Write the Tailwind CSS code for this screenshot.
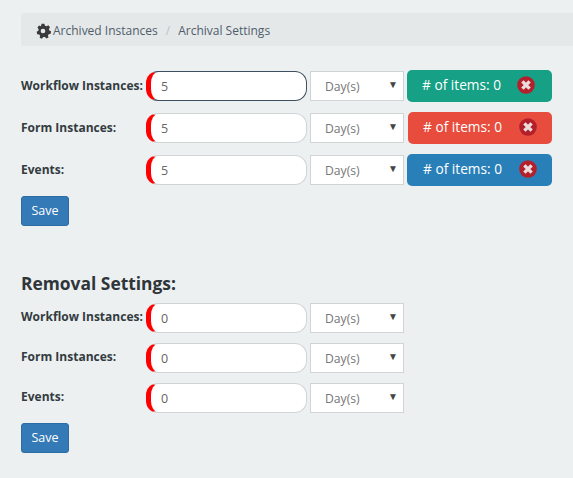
<!DOCTYPE html>
<html>
<head>
<meta charset="utf-8">
<script src="https://cdn.jsdelivr.net/npm/@tailwindcss/browser@4"></script>
</head>
<body class="m-0 bg-[#ecf0f1] font-['Open_Sans',sans-serif] overflow-hidden">
<div class="w-[573px] h-[478px] pt-[13px] pl-[21px] overflow-hidden">
  <div class="h-[33px] w-[552px] bg-[#e4e8e9] rounded-l-[3px] flex items-center pl-[14px] text-[12px] text-[#4f5d6b]">
    <svg class="w-[16px] h-[16px] mr-[2px] mt-[3px]" viewBox="0 0 24 24"><path fill="#3a3a3a" fill-rule="evenodd" d="M10 1h4l1 3 2.2.9 2.9-1.400 2.400 2.900-1.600 2.600.6 2.200 2.500 1.300-.4 3.600-3 .6-1.200 2 .9 3-3.200 1.700-2.100-2.300h-2.600L10.300 23.500 7 22l.7-3-1.400-1.900-3-.4L2.500 13l2.500-1.400.4-2.300L3.700 6.700 6 3.800l2.800 1.200zM12 8.500a3.500 3.500 0 1 0 0 7 3.500 3.500 0 0 0 0-7z"/></svg>
    <span class="mt-[3px]">Archived Instances</span>
    <span class="text-[#b9c2c6] mx-[8px] mt-[3px]">/</span>
    <span class="mt-[3px]">Archival Settings</span>
  </div>

  <div class="mt-[24px] flex flex-col gap-[10px]">
    <div class="flex items-center h-[32px]">
      <label class="w-[125px] text-[12px] font-bold text-[#333b3f] leading-none">Workflow Instances:</label>
      <div class="w-[161px] h-[30px] bg-white rounded-[12px] border border-[#3f4f5f] border-l-[5px] border-l-[#ff0000] pl-[10px] pt-[2px] flex items-center text-[12.5px] text-[#666]">5</div>
      <div class="ml-[3px] w-[94px] h-[30px] bg-white border border-[#d0d4d5] pl-[14px] pr-[5px] pt-[2px] flex items-center justify-between text-[12.2px] text-[#777]"><span>Day(s)</span><span class="text-[10px] text-[#444] -mt-[5px]">▼</span></div>
      <div class="ml-[3px] w-[145px] h-[32px] bg-[#16a085] rounded-[5px] flex items-center pl-[15px] text-[13.7px] text-white">
        <span class="-mt-[2px]"># of items: 0</span>
        <svg class="w-[18px] h-[18px] ml-[16px] -mt-[3px]" viewBox="0 0 20 20"><circle cx="10" cy="10" r="9.800" fill="#b3202c"/><path d="M6 6l8 8M14 6l-8 8" stroke="#ecdcdc" stroke-width="3.800"/></svg>
      </div>
    </div>
    <div class="flex items-center h-[32px]">
      <label class="w-[125px] text-[12px] font-bold text-[#333b3f] leading-none">Form Instances:</label>
      <div class="w-[161px] h-[30px] bg-white rounded-[12px] border border-[#d0d4d5] border-l-[5px] border-l-[#ff0000] pl-[10px] pt-[2px] flex items-center text-[12.5px] text-[#666]">5</div>
      <div class="ml-[3px] w-[94px] h-[30px] bg-white border border-[#d0d4d5] pl-[14px] pr-[5px] pt-[2px] flex items-center justify-between text-[12.2px] text-[#777]"><span>Day(s)</span><span class="text-[10px] text-[#444] -mt-[5px]">▼</span></div>
      <div class="ml-[4px] w-[144px] h-[32px] bg-[#e74c3c] rounded-[5px] flex items-center pl-[15px] text-[13.7px] text-white">
        <span class="-mt-[2px]"># of items: 0</span>
        <svg class="w-[18px] h-[18px] ml-[17px] -mt-[3px]" viewBox="0 0 20 20"><circle cx="10" cy="10" r="9.800" fill="#b3202c"/><path d="M6 6l8 8M14 6l-8 8" stroke="#ecdcdc" stroke-width="3.800"/></svg>
      </div>
    </div>
    <div class="flex items-center h-[32px]">
      <label class="w-[125px] text-[12px] font-bold text-[#333b3f] leading-none">Events:</label>
      <div class="w-[161px] h-[30px] bg-white rounded-[12px] border border-[#d0d4d5] border-l-[5px] border-l-[#ff0000] pl-[10px] pt-[2px] flex items-center text-[12.5px] text-[#666]">5</div>
      <div class="ml-[3px] w-[94px] h-[30px] bg-white border border-[#d0d4d5] pl-[14px] pr-[5px] pt-[2px] flex items-center justify-between text-[12.2px] text-[#777]"><span>Day(s)</span><span class="text-[10px] text-[#444] -mt-[5px]">▼</span></div>
      <div class="ml-[3px] w-[145px] h-[32px] bg-[#2980b9] rounded-[5px] flex items-center pl-[16px] text-[13.7px] text-white">
        <span class="-mt-[2px]"># of items: 0</span>
        <svg class="w-[18px] h-[18px] ml-[17px] -mt-[3px]" viewBox="0 0 20 20"><circle cx="10" cy="10" r="9.800" fill="#b3202c"/><path d="M6 6l8 8M14 6l-8 8" stroke="#ecdcdc" stroke-width="3.800"/></svg>
      </div>
    </div>
  </div>

  <div class="mt-[10px] w-[48px] h-[30px] bg-[#337ab7] border border-[#2e6da4] rounded-[3px] text-white text-[12.500px] flex items-center justify-center">Save</div>

  <h2 class="mt-[45px] text-[17.4px] leading-[24px] font-bold text-[#2f3539]">Removal Settings:</h2>

  <div class="mt-[8px] flex flex-col gap-[10px]">
    <div class="flex items-center h-[30px]">
      <label class="w-[125px] text-[12px] font-bold text-[#333b3f] leading-none -mt-[2px]">Workflow Instances:</label>
      <div class="w-[161px] h-[30px] bg-white rounded-[12px] border border-[#d0d4d5] border-l-[5px] border-l-[#ff0000] pl-[10px] pt-[2px] flex items-center text-[12.5px] text-[#666]">0</div>
      <div class="ml-[3px] w-[94px] h-[30px] bg-white border border-[#d0d4d5] pl-[14px] pr-[5px] pt-[2px] flex items-center justify-between text-[12.2px] text-[#777]"><span>Day(s)</span><span class="text-[10px] text-[#444] -mt-[5px]">▼</span></div>
    </div>
    <div class="flex items-center h-[30px]">
      <label class="w-[125px] text-[12px] font-bold text-[#333b3f] leading-none -mt-[2px]">Form Instances:</label>
      <div class="w-[161px] h-[30px] bg-white rounded-[12px] border border-[#d0d4d5] border-l-[5px] border-l-[#ff0000] pl-[10px] pt-[2px] flex items-center text-[12.5px] text-[#666]">0</div>
      <div class="ml-[3px] w-[94px] h-[30px] bg-white border border-[#d0d4d5] pl-[14px] pr-[5px] pt-[2px] flex items-center justify-between text-[12.2px] text-[#777]"><span>Day(s)</span><span class="text-[10px] text-[#444] -mt-[5px]">▼</span></div>
    </div>
    <div class="flex items-center h-[30px]">
      <label class="w-[125px] text-[12px] font-bold text-[#333b3f] leading-none -mt-[2px]">Events:</label>
      <div class="w-[161px] h-[30px] bg-white rounded-[12px] border border-[#d0d4d5] border-l-[5px] border-l-[#ff0000] pl-[10px] pt-[2px] flex items-center text-[12.5px] text-[#666]">0</div>
      <div class="ml-[3px] w-[94px] h-[30px] bg-white border border-[#d0d4d5] pl-[14px] pr-[5px] pt-[2px] flex items-center justify-between text-[12.2px] text-[#777]"><span>Day(s)</span><span class="text-[10px] text-[#444] -mt-[5px]">▼</span></div>
    </div>
  </div>

  <div class="mt-[10px] w-[48px] h-[30px] bg-[#337ab7] border border-[#2e6da4] rounded-[3px] text-white text-[12.500px] flex items-center justify-center">Save</div>
</div>
</body>
</html>
